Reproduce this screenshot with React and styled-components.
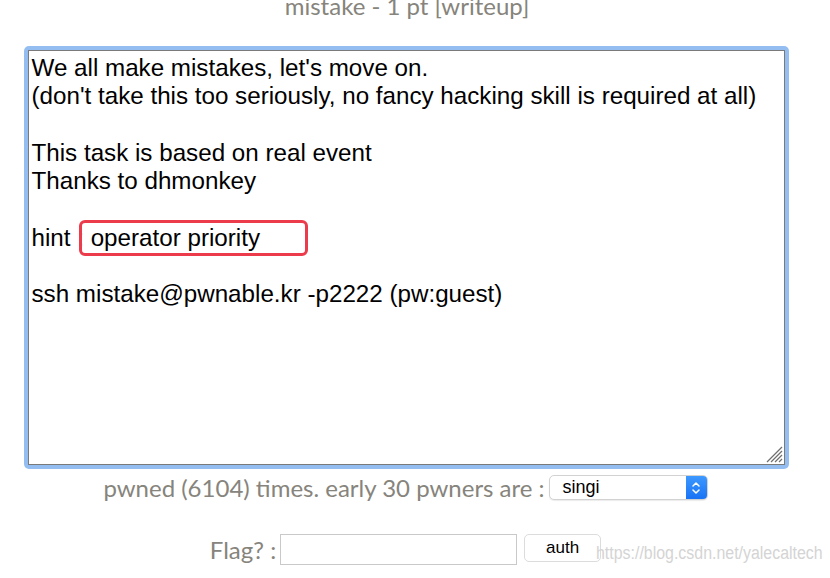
import React from "react";
import styled, { createGlobalStyle } from "styled-components";

const Global = createGlobalStyle`
  html, body { margin: 0; padding: 0; background: #fff; }
  body { width: 830px; height: 578px; overflow: hidden; }
`;

const Page = styled.div`
  width: 814px;
  display: flex;
  flex-direction: column;
  align-items: center;
  position: relative;
`;

const Title = styled.h2`
  margin: -8px 0 0;
  font-family: Lato, "Open Sans", sans-serif;
  font-weight: 400;
  font-size: 24px;
  line-height: 28px;
  color: #86847c;
`;

const Ring = styled.div`
  margin-top: 26px;
  margin-left: -2px;
  padding: 4px;
  border-radius: 5px;
  background: #94bef2;
  display: flex;
`;

const Description = styled.div`
  position: relative;
  box-sizing: border-box;
  width: 757px;
  height: 415px;
  border: 1px solid #7a7a7a;
  background: #fff;
  padding: 3px 3px;
  font-family: "Liberation Sans", Arial, sans-serif;
  font-size: 24.2px;
  line-height: 28.25px;
  color: #000;
  white-space: pre-wrap;
`;

const Line = styled.div`
  min-height: 28.25px;
`;

const HintMark = styled.span`
  position: absolute;
  left: 50px;
  top: 169px;
  width: 223px;
  height: 30px;
  border: 3px solid #ec3b4b;
  border-radius: 6px;
`;

const Grip = styled.svg`
  position: absolute;
  right: 1px;
  bottom: 1px;
`;

const InfoRow = styled.div`
  display: flex;
  align-items: center;
  gap: 4px;
  margin-top: 4px;
  margin-left: -3px;
`;

const Label = styled.span`
  font-family: Lato, "Open Sans", sans-serif;
  font-size: 24px;
  color: #86847c;
`;

const SelectBox = styled.div`
  box-sizing: border-box;
  width: 159px;
  height: 25px;
  border: 1px solid #d2d2d2;
  border-radius: 5px;
  background: #fff;
  display: flex;
  align-items: stretch;
  overflow: hidden;
  box-shadow: 0 1px 1px rgba(0,0,0,0.08);
`;

const SelectText = styled.span`
  flex: 1;
  padding-left: 13px;
  font-family: "Liberation Sans", Arial, sans-serif;
  font-size: 18px;
  line-height: 23px;
  color: #000;
`;

const SelectArrow = styled.span`
  width: 21px;
  background: linear-gradient(#3d98ff, #1873f5);
  display: flex;
  align-items: center;
  justify-content: center;
`;

const FlagRow = styled.div`
  display: flex;
  align-items: center;
  margin-top: 32px;
  margin-left: -3px;
`;

const FlagInput = styled.input`
  box-sizing: border-box;
  width: 237px;
  height: 31px;
  margin-left: 4px;
  border: 1px solid #c9c9c9;
  background: #fff;
  outline: none;
`;

const AuthButton = styled.button`
  box-sizing: border-box;
  width: 77px;
  height: 28px;
  margin-left: 7px;
  margin-top: -3px;
  border: 1px solid #dcdcdc;
  border-radius: 5px;
  background: #fff;
  font-family: "Liberation Sans", Arial, sans-serif;
  font-size: 17px;
  color: #000;
  padding: 0;
`;

const Watermark = styled.span`
  position: absolute;
  left: 596px;
  top: 543px;
  font-family: "Liberation Sans", Arial, sans-serif;
  font-size: 18px;
  color: #d4d4d4;
  white-space: nowrap;
  transform: scaleX(0.885);
  transform-origin: left center;
`;

const lines = [
  "We all make mistakes, let's move on.",
  "(don't take this too seriously, no fancy hacking skill is required at all)",
  "",
  "This task is based on real event",
  "Thanks to dhmonkey",
  "",
  "hint : operator priority",
  "",
  "ssh mistake@pwnable.kr -p2222 (pw:guest)",
];

export default function App() {
  return (
    <>
      <Global />
      <Page>
        <Title>mistake - 1 pt [writeup]</Title>
        <Ring>
          <Description>
            {lines.map((l, i) => (
              <Line key={i}>{l}</Line>
            ))}
            <HintMark />
            <Grip width="20" height="20" viewBox="0 0 20 20">
              <g stroke="#6f6f6f" strokeWidth="1.3">
                <line x1="4" y1="19" x2="19" y2="4" />
                <line x1="8" y1="19" x2="19" y2="8" />
                <line x1="12" y1="19" x2="19" y2="12" />
                <line x1="16" y1="19" x2="19" y2="16" />
              </g>
            </Grip>
          </Description>
        </Ring>
        <InfoRow>
          <Label>pwned (6104) times. early 30 pwners are :</Label>
          <SelectBox>
            <SelectText>singi</SelectText>
            <SelectArrow>
              <svg width="10" height="16" viewBox="0 0 10 16">
                <path d="M2 6 L5 3 L8 6 M2 10 L5 13 L8 10" fill="none" stroke="#fff" strokeWidth="1.5" strokeLinecap="round" strokeLinejoin="round" />
              </svg>
            </SelectArrow>
          </SelectBox>
        </InfoRow>
        <FlagRow>
          <Label>Flag? :</Label>
          <FlagInput type="text" />
          <AuthButton>auth</AuthButton>
        </FlagRow>
        <Watermark>https://blog.csdn.net/yalecaltech</Watermark>
      </Page>
    </>
  );
}
